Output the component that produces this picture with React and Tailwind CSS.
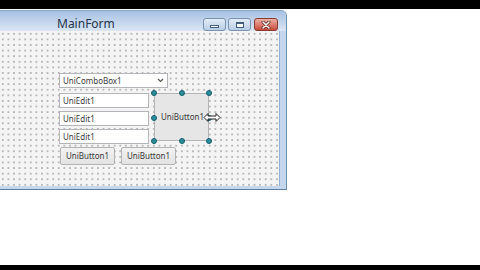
import React from 'react';

const font = { fontFamily: '"Noto Sans", "Open Sans", sans-serif' };

function Edit({ top }) {
  return (
    <div
      className="absolute left-[59px] w-[90px] h-[15px] bg-white border border-[#b3b5ba] flex items-center pl-[3px] text-[8px] text-[#3a3a3a]"
      style={{ top }}
    >
      UniEdit1
    </div>
  );
}

function SmallButton({ left }) {
  return (
    <div
      className="absolute top-[116px] w-[55px] h-[18px] rounded-[2px] border border-[#b4b4b4] bg-gradient-to-b from-[#f2f2f2] to-[#e3e3e3] flex items-center justify-center text-[8px] text-[#3a3a3a]"
      style={{ left }}
    >
      UniButton1
    </div>
  );
}

function Handle({ x, y }) {
  return (
    <div
      className="absolute w-[6px] h-[6px] rounded-full bg-[#2a8d9e] border border-[#17606c]"
      style={{ left: x - 3, top: y - 3 }}
    />
  );
}

function CaptionButtons() {
  return (
    <div className="flex items-start gap-[2px] pt-[7px] pr-[8px]">
      <div className="w-[23px] h-[13px] rounded-[3px] border border-[#7a93b1] bg-gradient-to-b from-[#e3ecf7] to-[#b9cde5] flex items-end justify-center pb-[2px]">
        <div className="w-[9px] h-[3px] bg-white border border-[#465d78]" />
      </div>
      <div className="w-[23px] h-[13px] rounded-[3px] border border-[#7a93b1] bg-gradient-to-b from-[#e3ecf7] to-[#b9cde5] flex items-center justify-center">
        <div className="w-[8px] h-[6px] bg-white border border-[#465d78] border-t-2" />
      </div>
      <div className="ml-[1px] w-[24px] h-[13px] rounded-[3px] border border-[#8a3b31] bg-gradient-to-b from-[#eab1a6] to-[#c8493b] flex items-center justify-center">
        <svg width="10" height="8" viewBox="0 0 10 8">
          <path d="M2 1 L8 7 M8 1 L2 7" stroke="#5a1b14" strokeWidth="3" strokeLinecap="round" />
          <path d="M2 1 L8 7 M8 1 L2 7" stroke="#fff" strokeWidth="1.6" strokeLinecap="round" />
        </svg>
      </div>
    </div>
  );
}

export default function App() {
  return (
    <div className="w-[480px] h-[270px] bg-white flex flex-col overflow-hidden" style={font}>
      <div className="h-[9px] bg-black shrink-0" />
      <div className="flex-1 pt-[1px]">
        <div className="w-[287px] h-[180px] flex flex-col rounded-tr-[6px] bg-[#c4d7ed] border-r border-[#6f8fae] overflow-hidden">
          <div className="h-[21px] shrink-0 flex justify-between bg-gradient-to-b from-[#a7c1e2] to-[#dbe6f3] border-t border-[#8aa7c8]">
            <div className="pl-[57px] pt-[4px] text-[12px] text-[#24364c]">MainForm</div>
            <CaptionButtons />
          </div>
          <div className="flex-1 flex">
            <div className="relative w-[280px] h-[155px] bg-[#f4f4f4] bg-[radial-gradient(circle,#b9b9b9_0.7px,transparent_1.1px)] bg-size-[5.6px_5.6px] border-r border-[#8fb0d2]">
              <div className="absolute left-[59px] top-[42px] w-[109px] h-[15px] bg-white border border-[#b3b5ba] flex items-center justify-between pl-[3px] pr-[3px] text-[8px] text-[#3a3a3a]">
                <span>UniComboBox1</span>
                <svg width="7" height="5" viewBox="0 0 7 5">
                  <path d="M1 1 L3.5 3.5 L6 1" stroke="#555" strokeWidth="1.2" fill="none" />
                </svg>
              </div>
              <Edit top={62} />
              <Edit top={80} />
              <Edit top={98} />
              <SmallButton left={60} />
              <SmallButton left={121} />
              <div className="absolute left-[154px] top-[62px] w-[55px] h-[48px] bg-[#e6e6e6] border border-[#b5b5b5] flex items-center justify-center pl-[2px] text-[8px] text-[#3a3a3a]">
                UniButton1
              </div>
              <Handle x={154} y={62} />
              <Handle x={182} y={62} />
              <Handle x={209} y={62} />
              <Handle x={154} y={87} />
              <Handle x={209} y={87} />
              <Handle x={154} y={110} />
              <Handle x={182} y={110} />
              <Handle x={209} y={110} />
              <svg className="absolute left-[203px] top-[81px]" width="18" height="11" viewBox="0 0 18 11">
                <path
                  d="M1 5.5 L5 1.5 L5 4 L13 4 L13 1.5 L17 5.5 L13 9.5 L13 7 L5 7 L5 9.5 Z"
                  fill="#fff"
                  stroke="#222"
                  strokeWidth="1"
                  strokeLinejoin="round"
                />
              </svg>
            </div>
            <div className="flex-1" />
          </div>
          <div className="h-[4px] shrink-0 bg-[#c4d7ed] border-b border-[#5d7e9e]" />
        </div>
      </div>
      <div className="h-[5px] bg-black shrink-0" />
    </div>
  );
}
